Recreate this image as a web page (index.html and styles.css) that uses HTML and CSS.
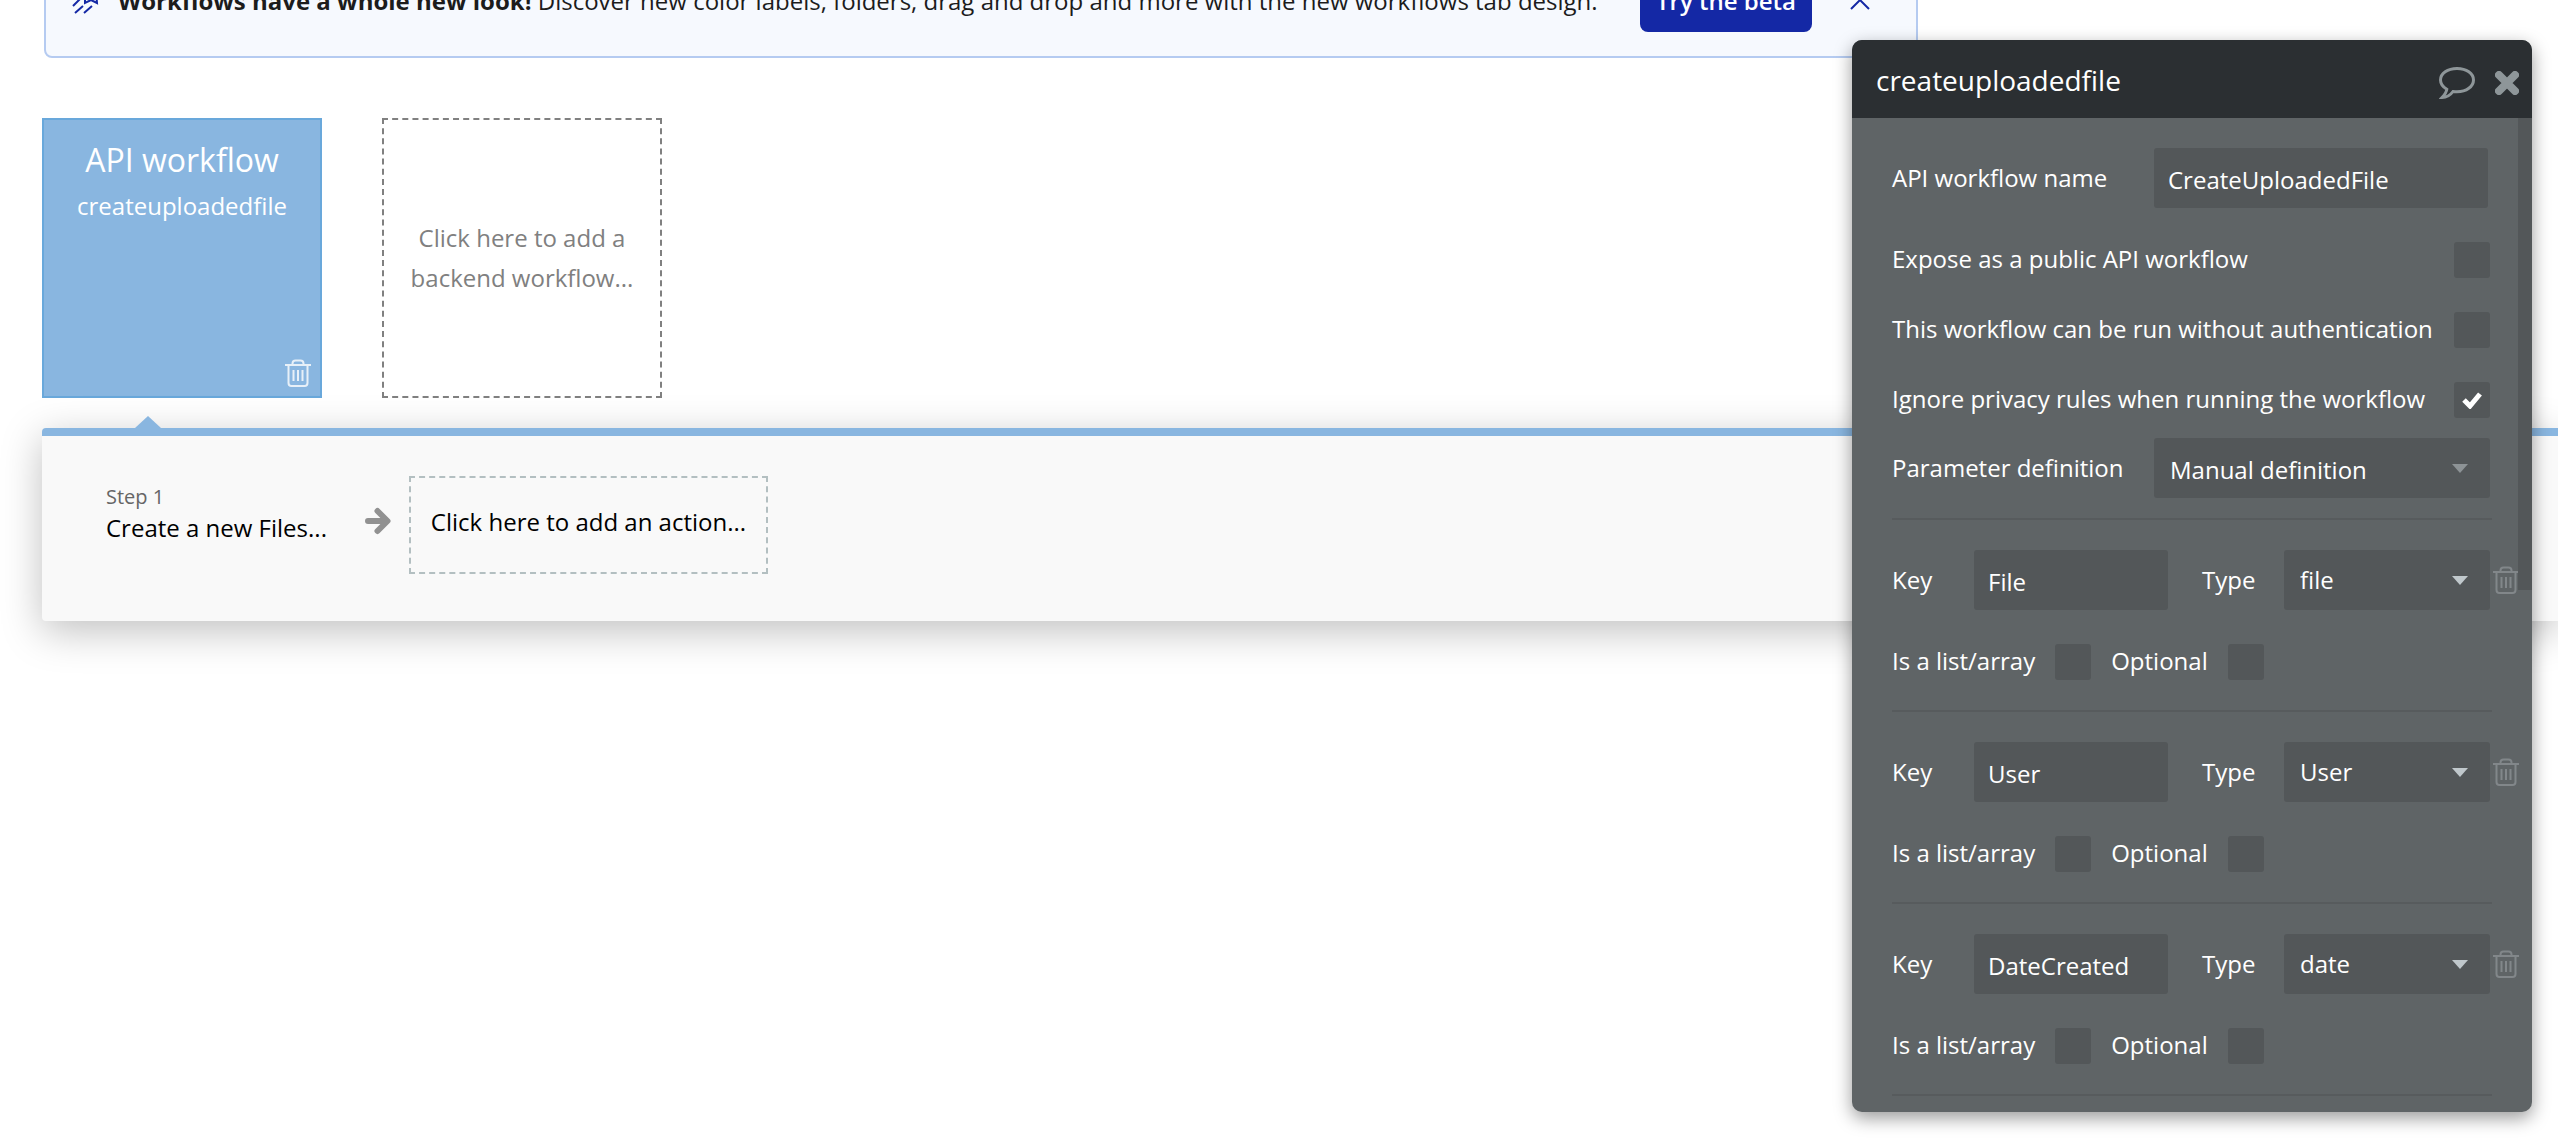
FILE: index.html
```html
<!DOCTYPE html>
<html lang="en">

<head>
	<meta charset="UTF-8">
	<title>Backend workflows</title>
	<link rel="stylesheet" href="styles.css">
</head>

<body>
	<svg class="sprite" aria-hidden="true">
		<symbol id="trash" viewBox="0 0 26 28">
			<path d="M0 6h26M7.500 6V4.500q0-3 3-3h5q3 0 3 3V6M3.500 6v18q0 3 3 3h13q3 0 3-3V6M8.500 11v11M13 11v11M17.500 11v11" />
		</symbol>
	</svg>

	<main class="editor">
		<section class="banner">
			<svg class="banner-icon" viewBox="0 0 28 32">
				<path d="M1 22L9 14M3 29L11 22M12 29L20 22M13 8v11l6-3 6 3-1-11M13 8l6-6 5 6" />
			</svg>
			<p class="banner-text"><b>Workflows have a whole new look!</b> Discover new color labels, folders, drag and drop and more with the new workflows tab design.</p>
			<button class="beta" type="button">Try the beta</button>
			<button class="collapse" type="button" aria-label="Collapse">
				<svg viewBox="0 0 24 24"><path d="M3 21l9-9 9 9" /></svg>
			</button>
		</section>

		<section class="workflows">
			<article class="workflow">
				<h2>API workflow</h2>
				<p>createuploadedfile</p>
				<button class="trash" type="button" aria-label="Delete workflow"><svg><use href="#trash" /></svg></button>
			</article>
			<button class="add-workflow" type="button">Click here to add a backend workflow...</button>
		</section>

		<section class="actions">
			<div class="step">
				<span class="step-number">Step 1</span>
				<span class="step-name">Create a new Files...</span>
			</div>
			<svg class="arrow" viewBox="0 0 26 28"><path d="M3 14h18M12.500 4l10 10-10 10" /></svg>
			<button class="add-action" type="button">Click here to add an action...</button>
		</section>
	</main>

	<aside class="popup">
		<header class="popup-head">
			<h1>createuploadedfile</h1>
			<button type="button" aria-label="Comment">
				<svg class="bubble" viewBox="0 0 36 32">
					<path d="M18 1.500C8.500 1.500 1.500 6.500 1.500 13c0 4 2.500 7 6.300 9.200C7.500 25.500 5.500 28 3 30.500c5 0 8.500-2.500 11-6 1.300.2 2.600.3 4 .3 9.500 0 16.500-5.300 16.500-11.800S27.500 1.500 18 1.500z" />
				</svg>
			</button>
			<button type="button" aria-label="Close">
				<svg class="close" viewBox="0 0 24 24"><path d="M4 4l16 16M20 4L4 20" /></svg>
			</button>
		</header>

		<form class="popup-body">
			<div class="row tall">
				<label for="wf-name">API workflow name</label>
				<input class="field wide" id="wf-name" type="text" value="CreateUploadedFile">
			</div>
			<div class="row">
				<label for="expose">Expose as a public API workflow</label>
				<input class="check" id="expose" type="checkbox">
			</div>
			<div class="row">
				<label for="noauth">This workflow can be run without authentication</label>
				<input class="check" id="noauth" type="checkbox">
			</div>
			<div class="row">
				<label for="privacy">Ignore privacy rules when running the workflow</label>
				<input class="check" id="privacy" type="checkbox" checked>
			</div>
			<div class="row definition">
				<label for="definition">Parameter definition</label>
				<select class="field wide dim" id="definition"><option>Manual definition</option></select>
			</div>

			<fieldset class="param">
				<div class="param-main">
					<label for="key1">Key</label>
					<input class="field" id="key1" type="text" value="File">
					<label for="type1">Type</label>
					<select class="field" id="type1"><option>file</option></select>
					<button class="trash" type="button" aria-label="Delete parameter"><svg><use href="#trash" /></svg></button>
				</div>
				<div class="param-flags">
					<label for="list1">Is a list/array</label>
					<input class="check" id="list1" type="checkbox">
					<label for="opt1">Optional</label>
					<input class="check" id="opt1" type="checkbox">
				</div>
			</fieldset>

			<fieldset class="param">
				<div class="param-main">
					<label for="key2">Key</label>
					<input class="field" id="key2" type="text" value="User">
					<label for="type2">Type</label>
					<select class="field" id="type2"><option>User</option></select>
					<button class="trash" type="button" aria-label="Delete parameter"><svg><use href="#trash" /></svg></button>
				</div>
				<div class="param-flags">
					<label for="list2">Is a list/array</label>
					<input class="check" id="list2" type="checkbox">
					<label for="opt2">Optional</label>
					<input class="check" id="opt2" type="checkbox">
				</div>
			</fieldset>

			<fieldset class="param">
				<div class="param-main">
					<label for="key3">Key</label>
					<input class="field" id="key3" type="text" value="DateCreated">
					<label for="type3">Type</label>
					<select class="field" id="type3"><option>date</option></select>
					<button class="trash" type="button" aria-label="Delete parameter"><svg><use href="#trash" /></svg></button>
				</div>
				<div class="param-flags">
					<label for="list3">Is a list/array</label>
					<input class="check" id="list3" type="checkbox">
					<label for="opt3">Optional</label>
					<input class="check" id="opt3" type="checkbox">
				</div>
			</fieldset>
			<hr>
			<span class="scrollbar"></span>
		</form>
	</aside>
</body>

</html>
```

FILE: styles.css
```css
* {
	box-sizing: border-box;
}

body,
h1,
h2,
p,
fieldset {
	margin: 0;
	padding: 0;
	border: 0;
	font-weight: 400;
}

body {
	font: 24px/40px "Open Sans", sans-serif;
	color: #000;
	background: #fff;
}

button,
input,
select {
	margin: 0;
	padding: 0;
	border: 0;
	font: inherit;
	color: inherit;
	background: none;
	appearance: none;
}

svg {
	display: block;
	fill: none;
	stroke: currentColor;
	stroke-width: 2;
}

.sprite {
	position: absolute;
	width: 0;
	height: 0;
}

.editor {
	min-height: 100vh;
	padding-left: 42px;
	overflow: hidden;
}

.banner {
	display: flex;
	align-items: center;
	width: 1874px;
	height: 116px;
	margin: -58px 0 60px 2px;
	padding: 0 44px 0 26px;
	border: 2px solid #b5cbf1;
	border-radius: 8px;
	background: #f6f9fe;
	color: #1c1c1c;
}

.banner-icon {
	width: 28px;
	height: 32px;
	margin-right: 18px;
	color: #1428a5;
}

.banner-text {
	flex: 1;
	padding-top: 1px;
	white-space: nowrap;
}

.banner b {
	font-weight: 700;
}

.beta {
	width: 172px;
	height: 64px;
	padding-top: 1px;
	border-radius: 8px;
	background: #1428a5;
	color: #fff;
	font-weight: 600;
}

.collapse {
	margin-left: 36px;
	color: #1428a5;
}

.collapse svg {
	width: 24px;
	height: 24px;
}

.workflows {
	display: flex;
	gap: 60px;
	margin-bottom: 30px;
}

.workflow,
.add-workflow {
	width: 280px;
	height: 280px;
	text-align: center;
}

.workflow {
	display: flex;
	flex-direction: column;
	padding: 18px 9px 9px;
	border: 2px solid #69a8db;
	background: #89b6e0;
	color: #fff;
}

.workflow h2 {
	font-size: 32px;
	line-height: 44px;
}

.workflow p {
	line-height: 48px;
}

.workflow .trash {
	margin: auto 0 0 auto;
	opacity: .8;
}

.trash svg {
	width: 26px;
	height: 28px;
}

.add-workflow {
	padding: 0 20px;
	border: 2px dashed #808080;
	color: #808080;
}

.actions {
	position: relative;
	display: flex;
	align-items: center;
	height: 193px;
	padding: 0 0 8px 64px;
	border-top: 8px solid #89b6e0;
	border-radius: 4px 0 0 4px;
	background: #f9f9f9;
	box-shadow: 0 10px 40px rgba(0, 0, 0, .25);
}

/* pointer to the selected workflow */
.actions::before {
	content: "";
	position: absolute;
	left: 93px;
	top: -20px;
	border: 13px solid transparent;
	border-top: 0;
	border-bottom: 12px solid #89b6e0;
}

.step {
	display: flex;
	flex-direction: column;
	width: 259px;
	padding-bottom: 26px;
	line-height: 31px;
}

.step-number {
	font-size: 20px;
	color: #666;
}

.arrow {
	width: 26px;
	height: 28px;
	margin: 0 18px 8px 0;
	color: #919191;
	stroke-width: 6;
	stroke-linejoin: round;
	stroke-linecap: round;
}

.add-action {
	width: 359px;
	height: 98px;
	padding-bottom: 5px;
	border: 2px dashed #b3bfc1;
}

.popup {
	position: absolute;
	top: 40px;
	right: 26px;
	width: 680px;
	border-radius: 10px;
	background: #5f6466;
	color: #fff;
	box-shadow: 0 6px 18px rgba(0, 0, 0, .4);
}

.popup-head {
	display: flex;
	align-items: center;
	gap: 20px;
	height: 78px;
	padding: 8px 13px 0 24px;
	border-radius: 10px 10px 0 0;
	background: #2b2f32;
	color: #8e9699;
}

.popup-head h1 {
	flex: 1;
	padding-bottom: 6px;
	font-size: 28px;
	color: #fff;
}

.bubble {
	width: 36px;
	height: 32px;
	stroke-width: 3;
}

.close {
	width: 24px;
	height: 24px;
	stroke-width: 8;
	stroke-linecap: round;
}

.popup-body {
	position: relative;
	padding: 20px 40px 16px;
}

.row {
	display: flex;
	align-items: center;
	justify-content: space-between;
	height: 70px;
	padding-right: 2px;
}

.row label {
	padding-bottom: 3px;
}

.row.tall {
	height: 80px;
	margin-bottom: 7px;
	padding-right: 4px;
}

.row.definition {
	height: 60px;
	margin: 3px 0 20px;
}

.row.tall label,
.row.definition label {
	padding-bottom: 0;
}

.field {
	flex: none;
	height: 60px;
	padding: 3px 14px 0;
	border-radius: 3px;
	background: #535759;
}

.field.wide {
	width: 336px;
}

.tall .field.wide {
	width: 334px;
}

select.field {
	padding: 0 16px;
	background: #535759 url("data:image/svg+xml,%3Csvg xmlns='http://www.w3.org/2000/svg' width='16' height='9'%3E%3Cpath d='M0 0h16L8 9z' fill='%23c0c8cc'/%3E%3C/svg%3E") no-repeat right 22px center;
}

select.dim {
	padding-top: 3px;
	background-image: url("data:image/svg+xml,%3Csvg xmlns='http://www.w3.org/2000/svg' width='16' height='9'%3E%3Cpath d='M0 0h16L8 9z' fill='%238d9396'/%3E%3C/svg%3E");
}

.check {
	flex: none;
	width: 36px;
	height: 36px;
	border-radius: 3px;
	background: #535759;
}

.check:checked {
	background: #535759 url("data:image/svg+xml,%3Csvg xmlns='http://www.w3.org/2000/svg' width='22' height='18'%3E%3Cpath d='M3 9l6 6L19 3' fill='none' stroke='%23fff' stroke-width='5'/%3E%3C/svg%3E") no-repeat center;
}

.param,
hr {
	margin: 0;
	border: 0;
	border-top: 2px solid #575b5d;
}

.param {
	height: 192px;
	padding-top: 30px;
}

.param-main {
	display: grid;
	grid-template-columns: 82px 194px 116px 206px 29px;
	align-items: center;
	margin-right: -40px;
}

.param-main .field + label {
	padding-left: 34px;
}

.param-main .trash {
	margin-left: 3px;
	color: #82878a;
}

.param-flags {
	display: flex;
	align-items: center;
	gap: 20px;
	margin-top: 31px;
}

.param-flags label {
	padding-bottom: 2px;
}

.scrollbar {
	position: absolute;
	top: 0;
	right: 0;
	width: 14px;
	height: 472px;
	background: #535759;
}
```
